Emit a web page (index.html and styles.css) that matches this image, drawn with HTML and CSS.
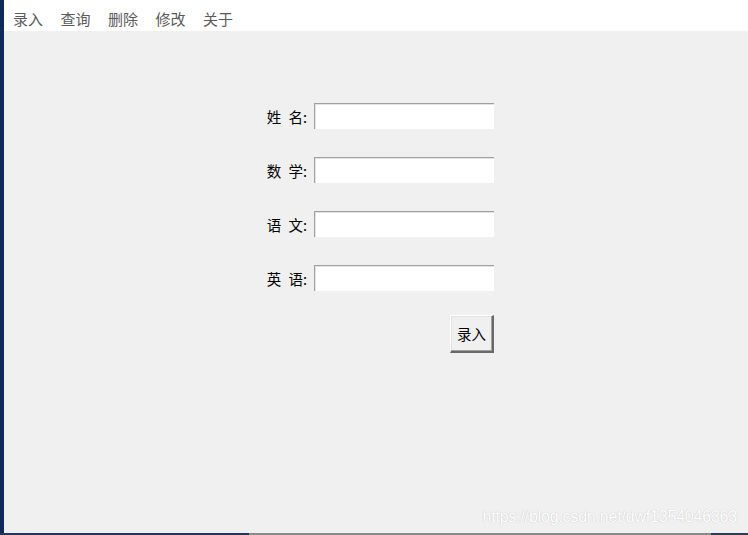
FILE: index.html
```html
<!DOCTYPE html>
<html lang="zh">
<head>
<meta charset="utf-8">
<title>录入</title>
<link rel="stylesheet" href="styles.css">
</head>
<body>
<div class="app">
  <div class="top">
    <div class="strip"></div>
    <div class="main">
      <nav class="menubar">
        <span class="menu-item">录入</span>
        <span class="menu-item">查询</span>
        <span class="menu-item">删除</span>
        <span class="menu-item">修改</span>
        <span class="menu-item">关于</span>
      </nav>
      <div class="content">
        <form class="form">
          <label class="label">姓 名:</label>
          <input class="field" type="text">
          <label class="label">数 学:</label>
          <input class="field" type="text">
          <label class="label">语 文:</label>
          <input class="field" type="text">
          <label class="label">英 语:</label>
          <input class="field" type="text">
          <button class="btn" type="button">录入</button>
        </form>
        <div class="watermark">https://blog.csdn.net/dwf1354046363</div>
      </div>
    </div>
  </div>
  <div class="bottombar">
    <div class="seg seg-dark"></div>
    <div class="seg seg-grey"></div>
    <div class="seg seg-dark2"></div>
  </div>
</div>
</body>
</html>
```
FILE: styles.css
```css
html, body {
  margin: 0;
  padding: 0;
  width: 748px;
  height: 535px;
  overflow: hidden;
  background: #f0f0f0;
}

.app {
  display: flex;
  flex-direction: column;
  width: 748px;
  height: 535px;
  font-family: "Noto Sans CJK SC", "Noto Sans", sans-serif;
}

.top {
  flex: 1;
  display: flex;
  min-height: 0;
}

.strip {
  width: 4px;
  background: #0d2a5c;
}

.main {
  flex: 1;
  display: flex;
  flex-direction: column;
}

.menubar {
  height: 31px;
  background: #ffffff;
  display: flex;
  align-items: center;
  gap: 17.5px;
  padding-left: 9px;
  padding-top: 6px;
  box-sizing: border-box;
}

.menu-item {
  font-size: 15px;
  color: #5a5a5a;
  line-height: 1;
  width: 30px;
}

.content {
  flex: 1;
  background: #f0f0f0;
  position: relative;
}

.form {
  display: grid;
  grid-template-columns: 52px 180px;
  column-gap: 6px;
  row-gap: 28px;
  align-items: center;
  margin: 72px 0 0 252px;
  width: max-content;
}

.label {
  font-size: 14.5px;
  color: #000;
  text-align: right;
  padding-right: 1px;
  white-space: pre;
  word-spacing: 4px;
}

.field {
  width: 180px;
  height: 26px;
  box-sizing: border-box;
  margin: 0;
  padding: 0;
  background: #ffffff;
  border-style: solid;
  border-width: 1px 0 0 1px;
  border-color: #a0a0a0 #ffffff #ffffff #a0a0a0;
  box-shadow: inset 1px 1px 0 #e3e3e3;
  outline: none;
}

.btn {
  grid-column: 2;
  justify-self: end;
  margin-top: -4px;
  width: 44px;
  height: 38px;
  box-sizing: border-box;
  padding: 0;
  background: #f0f0f0;
  font-family: "Noto Sans CJK SC", sans-serif;
  font-size: 14.5px;
  color: #000;
  border-style: solid;
  border-width: 1px 2px 2px 1px;
  border-color: #ffffff #696969 #696969 #ffffff;
  box-shadow: inset -1px -1px 0 #a0a0a0, inset 1px 1px 0 #e3e3e3;
}

.watermark {
  position: absolute;
  right: 11px;
  bottom: 7px;
  font-family: "Liberation Sans", Arial, sans-serif;
  font-size: 16px;
  color: #ffffff;
  text-shadow: 0 0 1px #c4c4c4, 0 0 1px #d0d0d0;
  letter-spacing: -0.2px;
}

.bottombar {
  height: 2px;
  display: flex;
}

.seg-dark {
  width: 249px;
  background: #26375a;
}

.seg-grey {
  width: 462px;
  background: #8a8a8a;
}

.seg-dark2 {
  flex: 1;
  background: #2e3d55;
}
```
